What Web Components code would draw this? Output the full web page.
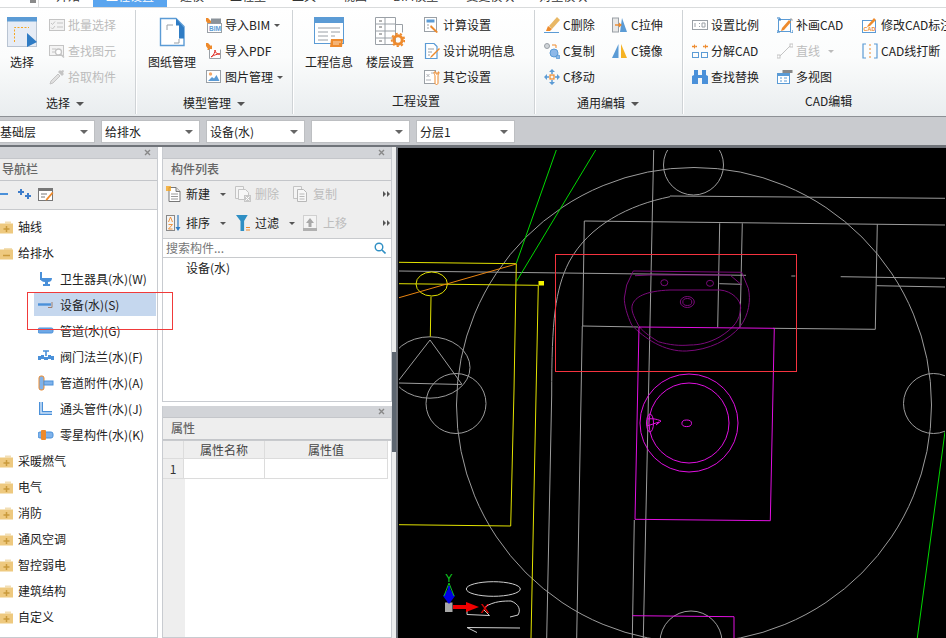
<!DOCTYPE html>
<html lang="zh"><head><meta charset="utf-8"><title>工程设置</title>
<style>
html,body{margin:0;padding:0;width:946px;height:638px;overflow:hidden;background:#fff;font:12px/16px "Noto Sans CJK SC","Noto Sans",sans-serif;color:#222}
</style></head><body>
<app-shell>
  <rb-tabs slot="tabs"></rb-tabs>
  <rb-ribbon slot="ribbon">
    <rb-group label="选择" caret w="136" lx="46">
      <rb-large label="选择" w="44" ml="0"><x-i n="select" s="30"></x-i></rb-large>
      <rb-col ml="5" w="86">
        <rb-small dis label="批量选择"><x-i n="batch"></x-i></rb-small>
        <rb-small dis label="查找图元"><x-i n="find"></x-i></rb-small>
        <rb-small dis label="拾取构件"><x-i n="pick"></x-i></rb-small>
      </rb-col>
    </rb-group>
    <rb-group label="模型管理" caret w="157" lx="47">
      <rb-large label="图纸管理" w="48" ml="12"><x-i n="drawing" s="30"></x-i></rb-large>
      <rb-col ml="10" w="84">
        <rb-small caret label="导入BIM"><x-i n="bim"></x-i></rb-small>
        <rb-small label="导入PDF"><x-i n="pdf"></x-i></rb-small>
        <rb-small caret label="图片管理"><x-i n="pic"></x-i></rb-small>
      </rb-col>
    </rb-group>
    <rb-group label="工程设置" w="242" up lx="99">
      <rb-large label="工程信息" w="48" ml="12"><x-i n="info" s="30"></x-i></rb-large>
      <rb-large label="楼层设置" w="48" ml="13"><x-i n="floor" s="30"></x-i></rb-large>
      <rb-col ml="10" w="100">
        <rb-small label="计算设置"><x-i n="calc"></x-i></rb-small>
        <rb-small label="设计说明信息"><x-i n="note"></x-i></rb-small>
        <rb-small label="其它设置"><x-i n="other"></x-i></rb-small>
      </rb-col>
    </rb-group>
    <rb-group label="通用编辑" caret w="148" lx="42">
      <rb-col ml="9" w="68">
        <rb-small label="C删除"><x-i n="cdel"></x-i></rb-small>
        <rb-small label="C复制"><x-i n="ccopy"></x-i></rb-small>
        <rb-small label="C移动"><x-i n="cmove"></x-i></rb-small>
      </rb-col>
      <rb-col w="60">
        <rb-small label="C拉伸"><x-i n="cstretch"></x-i></rb-small>
        <rb-small label="C镜像"><x-i n="cmirror"></x-i></rb-small>
      </rb-col>
    </rb-group>
    <rb-group label="CAD编辑" w="263" up last lx="122">
      <rb-col ml="9" w="85">
        <rb-small label="设置比例"><x-i n="scale"></x-i></rb-small>
        <rb-small label="分解CAD"><x-i n="split"></x-i></rb-small>
        <rb-small label="查找替换"><x-i n="binoc"></x-i></rb-small>
      </rb-col>
      <rb-col w="85">
        <rb-small label="补画CAD"><x-i n="patch"></x-i></rb-small>
        <rb-small dis caret label="直线"><x-i n="line"></x-i></rb-small>
        <rb-small label="多视图"><x-i n="multi"></x-i></rb-small>
      </rb-col>
      <rb-col w="84">
        <rb-small label="修改CAD标注"><x-i n="cadmark"></x-i></rb-small>
        <rb-small label="CAD线打断"><x-i n="cadcut"></x-i></rb-small>
      </rb-col>
    </rb-group>
  </rb-ribbon>
  <combo-bar slot="combos">
    <combo-box first>基础层</combo-box>
    <combo-box>给排水</combo-box>
    <combo-box>设备(水)</combo-box>
    <combo-box></combo-box>
    <combo-box>分层1</combo-box>
  </combo-bar>
  <work-area slot="main">
    <dock-panel slot="nav" heading="导航栏" pad="2">
      <tool-row slot="tools" h="29">
        <x-i n="collapse" w="9" h="16"></x-i><x-i n="expand" w="13" h="16" style="margin-left:9px"></x-i><x-i n="navdoc" style="margin-left:7px"></x-i>
      </tool-row>
      <nav-tree>
        <tree-row kind="plus" text="轴线"></tree-row>
        <tree-row kind="minus" text="给排水"></tree-row>
        <tree-row n="san" text="卫生器具(水)(W)"></tree-row>
        <tree-row n="equip" sel text="设备(水)(S)"></tree-row>
        <tree-row n="pipe" text="管道(水)(G)"></tree-row>
        <tree-row n="valve" text="阀门法兰(水)(F)"></tree-row>
        <tree-row n="acc" text="管道附件(水)(A)"></tree-row>
        <tree-row n="elbow" text="通头管件(水)(J)"></tree-row>
        <tree-row n="misc" text="零星构件(水)(K)"></tree-row>
        <tree-row kind="plus" text="采暖燃气"></tree-row>
        <tree-row kind="plus" text="电气"></tree-row>
        <tree-row kind="plus" text="消防"></tree-row>
        <tree-row kind="plus" text="通风空调"></tree-row>
        <tree-row kind="plus" text="智控弱电"></tree-row>
        <tree-row kind="plus" text="建筑结构"></tree-row>
        <tree-row kind="plus" text="自定义"></tree-row>
      </nav-tree>
    </dock-panel>
    <dock-panel slot="list" heading="构件列表" pad="8" style="height:255px">
      <tool-row slot="tools" h="29" noline style="padding-bottom:3px">
        <tool-btn label="新建" caret w="69"><x-i n="tnew" s="16"></x-i></tool-btn>
        <tool-btn label="删除" dis w="58"><x-i n="tdel" s="16"></x-i></tool-btn>
        <tool-btn label="复制" dis w="90"><x-i n="tcopy" s="16"></x-i></tool-btn>
        <more-arrows></more-arrows>
      </tool-row>
      <tool-row slot="tools" h="29" style="padding-bottom:2px">
        <tool-btn label="排序" caret w="69"><x-i n="tsort" s="16"></x-i></tool-btn>
        <tool-btn label="过滤" caret w="68"><x-i n="tfilter" s="16"></x-i></tool-btn>
        <tool-btn label="上移" dis w="80"><x-i n="tup" s="16"></x-i></tool-btn>
        <more-arrows></more-arrows>
      </tool-row>
      <search-box></search-box>
      <list-item>设备(水)</list-item>
    </dock-panel>
    <dock-panel slot="props" heading="属性" pad="8" style="flex:1;min-height:0">
      <prop-table></prop-table>
    </dock-panel>
    <cad-view slot="canvas"></cad-view>
  </work-area>
</app-shell>
<script>
const B='#5b9bd5',O='#ee8a2c',G='#9aa0a6',D='#c4c4c4',L='#dfe8f4';
const ICONS={
select:`<rect x=".5" y=".5" width="29" height="29" fill="#e6ecf5" stroke="#b9c4d2"/><rect width="30" height="4.5" fill="${B}"/><path d="M7.5 25V10.5H22" fill="none" stroke="#f5a623" stroke-dasharray="2 1.5"/><path d="M20 16l10 9-10 5z" fill="#2f7cc4"/>`,
batch:`<rect x=".5" y="2.5" width="15" height="11" fill="#f2f2f2" stroke="${D}"/><path d="M2 6l1.5 1.5L6 4.5M2 10.5l1.5 1.5L6 9M8 6h6M8 10h6" fill="none" stroke="${D}"/>`,
find:`<rect x=".5" y="2.5" width="14" height="10" fill="#f4f4f4" stroke="${D}"/><circle cx="9.5" cy="9" r="3" fill="#fff" stroke="${D}" stroke-width="1.3"/><path d="M12 11.5l3 3" stroke="${D}" stroke-width="1.6"/><path d="M3 6h4M3 9h3" stroke="${D}"/>`,
pick:`<path d="M1 15l1-3 7-7 2 2-7 7z" fill="#e0e0e0" stroke="${D}"/><path d="M9 3l2-2 1 1 2-1 1 1-1 2 1 1-2 2z" fill="${D}"/>`,
drawing:`<path d="M3.5 1.5H19l8 8v19H3.5z" fill="#fff" stroke="${B}" stroke-width="1.4"/><path d="M19 1.5l8 9v11h-5v-13h-3z" fill="#2f7cc4"/><path d="M10 13V8h6M22 22v4h-5" fill="none" stroke="${G}"/>`,
bim:`<path d="M0 1l2 0 3 3 1-1v5H1l1-1L0 4z" fill="${O}"/><rect x="1.5" y="6.5" width="14" height="9" fill="#fff" stroke="${G}"/><rect x="5" y="1.5" width="10" height="5" fill="#8a9299"/><text x="3" y="14" font-size="6.5" font-weight="700" fill="${B}" font-family="Liberation Sans">BIM</text>`,
pdf:`<path d="M0 0l2 0 3 3 1-1v5H1l1-1L0 3z" fill="${O}"/><path d="M3.5 6v9.5h11V6.5" fill="#fff" stroke="${G}"/><path d="M5 14c3-2 4-5 4-7 0 3 2 4 5 4-3 0-6 1-9 3z" fill="none" stroke="#e0332b"/>`,
pic:`<rect x=".5" y="1.5" width="14" height="12" fill="#fff" stroke="${G}"/><circle cx="4.5" cy="5" r="1.7" fill="#f5a96a"/><path d="M2 12l4-4 2 1.500 2.500-3.500 3 6z" fill="${B}"/>`,
info:`<rect x=".5" y=".5" width="29" height="26" fill="#fff" stroke="${B}"/><rect width="30" height="6" fill="${B}"/><path d="M4 11h22M4 15h10M4 19h10M4 23h10M17 15h9M17 19h4" stroke="${G}"/><path d="M17 22h12l-1 8H16z" fill="${O}"/><path d="M19 25h8M19 27h6" stroke="#fff" stroke-width=".7"/>`,
floor:`<path d="M.5.5h20v27H.5zM.5 7h20M.5 14h20M.5 21h20M10 .5v27" fill="#fff" stroke="${G}"/><path d="M4 4h3M4 10h3M4 17h3M4 24h3" stroke="#666"/><path d="M20.500 7.500h7v8" fill="none" stroke="${G}"/><circle cx="23" cy="23" r="4.200" fill="none" stroke="${O}" stroke-width="3"/><circle cx="23" cy="23" r="6.300" fill="none" stroke="${O}" stroke-width="1.800" stroke-dasharray="2.200 2.200"/>`,
calc:`<rect x=".5" y=".5" width="12" height="14" fill="#fff" stroke="${G}"/><rect x="2.500" y="2.500" width="8" height="3" fill="${B}"/><path d="M3 8h2M3 11h2" stroke="${G}"/><path d="M7 8l7 7-1.500 1L6 10z" fill="${O}"/>`,
note:`<path d="M1.500.5H10l3 3v12H1.500z" fill="#fff" stroke="${B}" stroke-width="1.200"/><path d="M4 6h6M4 9h4M4 12h2" stroke="${G}"/><path d="M7 13l8-8 1 1-8 8-2 1z" fill="${O}"/>`,
other:`<rect x=".5" y="1.500" width="11" height="13" fill="#fff" stroke="${G}"/><path d="M2.500 5l3 3M2.500 8l3-3M7 4h3M2 11h5" stroke="${G}" stroke-width=".8"/><path d="M10 3c0 2 1 3 1 4v7c0 2 3 2 3 0V7c0-1 1-2 1-4l-1 0v2h-2V3z" fill="#fff" stroke="${O}"/>`,
cdel:`<path d="M5 9L13 0l3 3-8 9z" fill="#e8b765"/><path d="M4 9l4 3-2 2-4 0z" fill="${O}"/><path d="M0 15.500h15" stroke="${B}"/>`,
ccopy:`<circle cx="3" cy="3" r="2.500" fill="#d0d4d8" stroke="${G}"/><circle cx="10" cy="10" r="4" fill="#8db8e8" stroke="${B}"/><circle cx="14" cy="14" r="2" fill="#8db8e8" stroke="${B}"/><path d="M8 2h4v3" fill="none" stroke="${O}"/>`,
cmove:`<rect x="6" y="6" width="4" height="4" fill="none" stroke="${O}" stroke-width="1.200"/><path d="M8 0l3 3H5zM8 16l3-3H5zM0 8l3-3v6zM16 8l-3-3v6z" fill="${B}"/><path d="M8 3v2M8 11v2M3 8h2M11 8h2" stroke="${B}" stroke-width="1.500"/>`,
cstretch:`<rect x=".5" y="1" width="6" height="14" fill="#e8e8e8" stroke="${G}"/><path d="M10 1l5 14H8z" fill="${B}"/><path d="M3 8h6" stroke="${O}" stroke-width="1.400"/><path d="M10 8L7 5.500v5z" fill="${O}"/>`,
cmirror:`<path d="M6.500 1v14H0z" fill="${B}"/><path d="M9 1v14h6z" fill="#f5b324"/>`,
scale:`<rect x=".5" y="3.500" width="15" height="9" fill="#fff" stroke="${G}"/><path d="M3 6v4M7.500 6v1M7.500 9v1M10 6v4h3V6z" fill="none" stroke="${G}"/>`,
split:`<path d="M0 3.500h2M4 3.500h1M11 3.500h1M14 3.500h2" stroke="${O}" stroke-width="1.500"/><path d="M2 1l2 2.500L2 6zM14 1l-2 2.500L14 6z" fill="${O}"/><rect x=".5" y="9.500" width="6" height="5" fill="none" stroke="${B}"/><rect x="9.500" y="9.500" width="6" height="5" fill="none" stroke="${B}"/>`,
binoc:`<path d="M2 1h4v5h4V1h4v5l2 1v8h-6V9H6v6H0V7l2-1z" fill="#4a90d9"/>`,
patch:`<rect x="1.500" y="2.500" width="12" height="12" fill="none" stroke="${B}"/><path d="M0 1h3v3M16 13v3h-3M0 13v3h3" fill="none" stroke="#2f7cc4"/><path d="M5 11l7-8 2 2-7 8-3 1z" fill="${O}"/><path d="M13 2l1-1 2 2-1 1z" fill="#aaa"/>`,
line:`<path d="M2 14L14 2" stroke="${D}"/><rect x="0" y="12" width="3" height="3" fill="#fff" stroke="${D}"/><rect x="13" y="1" width="3" height="3" fill="#fff" stroke="${D}"/>`,
multi:`<rect x="5.500" y="1" width="10" height="3" fill="#888"/><rect x=".5" y="4.500" width="12" height="10" fill="#fff" stroke="${B}"/><rect y="4" width="13" height="3" fill="${B}"/><path d="M3 9h2M3 12h2M7 9h3M7 12h3" stroke="${B}"/>`,
cadmark:`<rect x=".5" y="3.500" width="13" height="12" fill="#fff" stroke="${B}"/><text x="1.500" y="13.500" font-size="5.500" font-weight="700" fill="${O}" font-family="Liberation Sans">CAD</text><path d="M6 8l6-7 2 2-6 6-3 1z" fill="${O}"/>`,
cadcut:`<path d="M4 1H1v14h3M12 1h3v14h-3" fill="none" stroke="${B}" stroke-width="1.200"/><path d="M8 1v14" stroke="${O}" stroke-dasharray="2 2"/>`,
collapse:`<path d="M0 7h8" stroke="#4a90d9" stroke-width="2"/>`,
expand:`<path d="M3 2v6M0 5h6" stroke="#3d7cc9" stroke-width="2"/><path d="M10 6v6M7 9h6" stroke="#3d7cc9" stroke-width="2"/>`,
navdoc:`<rect x=".5" y="1.500" width="14" height="12" fill="#fff" stroke="#777"/><rect width="15" height="3" y="1" fill="#777"/><path d="M3 7h6M3 10h4" stroke="#777"/><path d="M8 12l6-7 1.500 1-6 7-2 .5z" fill="${O}"/>`,
san:`<path d="M3 1v8" stroke="#4a90d9" stroke-width="2"/><path d="M2 7h12c0 3-2 4-4 4v2h2v2H5v-2h2v-2c-3 0-5-2-5-4z" fill="#4a90d9"/>`,
equip:`<path d="M0 7.500h13" stroke="#4a90d9" stroke-width="2.400"/><path d="M10 10.500h4V5" fill="none" stroke="#a08070"/>`,
pipe:`<rect x="0" y="5" width="15" height="5" rx="1.500" fill="#6fa8e6" stroke="#4a90d9"/>`,
valve:`<path d="M0 7h3v-1h3v2h4V6h3v1h3v4h-3v-1h-3v1H6v-1H3v1H0z" fill="#4a90d9"/><path d="M5 2h6M8 2v5" stroke="#4a90d9" stroke-width="1.600"/>`,
acc:`<rect x="1" y="1" width="5" height="14" rx="2" fill="#7fb2ea" stroke="${O}"/><rect x="6" y="6" width="9" height="4" fill="#7fb2ea" stroke="#4a90d9"/>`,
elbow:`<path d="M3 1v11h11" fill="none" stroke="#4a90d9" stroke-width="4"/><path d="M3 1v11h11" fill="none" stroke="#cfe2f7" stroke-width="1.500"/>`,
misc:`<rect x="0" y="5" width="15" height="6" rx="2" fill="#7fb2ea" stroke="#4a90d9"/><rect x="3" y="3" width="5" height="10" fill="${O}" rx="1"/>`,
tnew:`<path d="M3 1.500h7l4 4v10H3z" fill="#fff" stroke="#777"/><path d="M5 8h7M5 10.500h7M5 13h7" stroke="#999"/><path d="M0 0h5v5H0z" fill="#f5a623" opacity=".8"/><path d="M10 1.500v4h4" fill="#ddd" stroke="#777"/>`,
tdel:`<path d="M.5.5h8v12H.5z" fill="#f4f4f4" stroke="${D}"/><path d="M3.500 3.500h7l3 3v7h-10z" fill="#f7f7f7" stroke="${D}"/><rect x="9" y="9" width="7" height="7" fill="#c8c8c8"/><path d="M10.500 10.500l4 4M14.500 10.500l-4 4" stroke="#fff"/>`,
tcopy:`<path d="M.5.5h8v12H.5z" fill="#f4f4f4" stroke="${D}"/><path d="M4.500 3.500h6l3 3v9h-9z" fill="#f7f7f7" stroke="#b8b8b8"/><path d="M6.500 8h5M6.500 10.500h5M6.500 13h5" stroke="#b8b8b8"/>`,
tsort:`<rect x=".5" y=".5" width="8" height="15" fill="#f4f4f4" stroke="#888"/><path d="M2.500 7l2-5 2 5M2.500 9.500h4l-4 4.500h4" fill="none" stroke="${O}" stroke-width=".9"/><path d="M12 0v14" stroke="#2f7cc4" stroke-width="1.200"/><path d="M9.500 12l2.500 4 2.500-4z" fill="#2f7cc4"/>`,
tfilter:`<path d="M0 0h13l-4 6v10H5V6z" fill="#2f8fc4" transform="translate(1 0) scale(.9 1)"/><path d="M11 12.500h4M11 15h4" stroke="${O}" stroke-width="1.200"/>`,
tup:`<rect x=".5" y=".5" width="13" height="15" fill="#f4f4f4" stroke="#d0d0d0"/><path d="M7 3l4 5H8.500v4h-3V8H3z" fill="#a8a8a8"/><rect y="13" width="14" height="3" fill="#b0b0b0"/>`
};
function def(name,html,init){
  customElements.define(name,class extends HTMLElement{
    constructor(){super();this.attachShadow({mode:'open'}).innerHTML=html}
    connectedCallback(){init&&init.call(this,this.shadowRoot)}
  });
}
def('x-i','<style>:host{display:inline-flex;flex:none}svg{display:block}</style>',function(r){
  const s=+this.getAttribute('s')||16,w=+this.getAttribute('w')||s,h=+this.getAttribute('h')||s;
  r.innerHTML+=`<svg width="${w}" height="${h}" viewBox="0 0 ${w} ${h}" aria-hidden="true">${ICONS[this.getAttribute('n')]||''}</svg>`;
});
def('app-shell',`<style>:host{display:flex;flex-direction:column;width:946px;height:638px;overflow:hidden;position:relative}
.m{flex:1;min-height:0;display:flex}</style><slot name="tabs"></slot><slot name="ribbon"></slot><slot name="combos"></slot><div class="m"><slot name="main"></slot></div>`);
def('rb-tabs',`<style>:host{display:flex;flex:none;height:7px;overflow:hidden;background:#fff;border-bottom:1px solid #d9dbdc;align-items:flex-start;color:#333}
span{display:block;margin-top:-12px;line-height:16px;font-size:12px;white-space:nowrap}
.a{width:74px;height:7px;background:#5aa5ef;color:#fff;display:block;margin-left:13px;overflow:hidden;text-align:center;flex:none}.a span{margin-top:-12px}
.q{width:6px;height:3px;background:#8a8a8a;margin-left:30px;flex:none}.v{width:1px;height:7px;background:#ddd;margin-left:2px;flex:none}</style>
<i class="q"></i><i class="v"></i><span style="margin-left:17px">开始</span><div class="a"><span>工程设置</span></div><span style="margin-left:13px">建模</span><span style="margin-left:26px">工程量</span><span style="margin-left:26px">工具</span><span style="margin-left:27px">视图</span><span style="margin-left:26px">BIM模型</span><span style="margin-left:28px">变更模块</span><span style="margin-left:25px">对量模块</span>`);
def('rb-ribbon',`<style>:host{display:flex;flex:none;height:109px;box-sizing:border-box;padding-top:2px;background:linear-gradient(#fff 0,#fbfcfc 45%,#e9edef 100%);overflow:hidden;border-bottom:1px solid #8d9095}</style><slot></slot>`);
def('rb-group',`<style>:host{display:flex;flex-direction:column;flex:none;box-sizing:border-box;height:104px;border-right:1px solid #cfd3d6;box-shadow:1px 0 0 #fff;white-space:nowrap}
.c{display:flex;height:80px;box-sizing:border-box;padding-top:2px;flex:none}.l{height:24px;display:flex;align-items:center;gap:6px;padding-top:2px;box-sizing:border-box}
.l.up{padding-top:0;padding-bottom:2px}
i{display:none;border:4px solid transparent;border-top:4px solid #555;border-bottom:0;width:0;height:0;margin-top:1px}.car i{display:block}</style><div class="c"><slot></slot></div><div class="l"><span id="t"></span><i></i></div>`,function(r){
  this.style.width=this.getAttribute('w')+'px';
  r.getElementById('t').textContent=this.getAttribute('label');
  const l=r.querySelector('.l');
  l.style.paddingLeft=this.getAttribute('lx')+'px';
  if(this.hasAttribute('caret'))l.classList.add('car');
  if(this.hasAttribute('up'))l.classList.add('up');
  if(this.hasAttribute('last')){this.style.border='none';this.style.boxShadow='none'}
});
def('rb-large',`<style>:host{display:flex;flex-direction:column;align-items:center;flex:none;padding-top:5px;box-sizing:border-box;height:78px}
.l{margin-top:7px;line-height:16px;white-space:nowrap}</style><slot></slot><div class="l"></div>`,function(r){
  this.style.width=this.getAttribute('w')+'px';this.style.marginLeft=(this.getAttribute('ml')||0)+'px';
  r.querySelector('.l').textContent=this.getAttribute('label');
});
def('rb-col',`<style>:host{display:flex;flex-direction:column;flex:none}</style><slot></slot>`,function(){
  this.style.width=this.getAttribute('w')+'px';this.style.marginLeft=(this.getAttribute('ml')||0)+'px';
});
def('rb-small',`<style>:host{display:flex;align-items:center;height:26px;gap:3px;white-space:nowrap}
:host([dis]){color:#bcbcbc}i{display:none;border:3.500px solid transparent;border-top:3.500px solid #555;border-bottom:0;width:0;height:0;margin-left:1px}:host([caret]) i{display:block}:host([dis]) i{border-top-color:#bbb;margin-left:5px}</style><slot></slot><span></span><i></i>`,function(r){
  r.querySelector('span').textContent=this.getAttribute('label');
});
def('combo-bar',`<style>:host{display:flex;flex:none;box-sizing:border-box;padding-top:3px;gap:6px;background:#c9cbcf;overflow:hidden;border-bottom:2px solid #6f7379;height:30px}</style><slot></slot>`);
def('combo-box',`<style>:host{display:flex;align-items:center;justify-content:space-between;flex:none;box-sizing:border-box;width:99px;height:23px;background:#fff;border:1px solid #bdbfc2;padding:0 6px 0 3px;white-space:nowrap}
:host([first]){margin-left:-5px;width:100px;padding-left:4px}
i{border:4px solid transparent;border-top:4px solid #666;border-bottom:0;width:0;height:0}</style><span><slot></slot></span><i></i>`);
def('work-area',`<style>:host{display:flex;flex:1;min-width:0;height:491px;position:relative;background:#fff}
.n{width:158px;flex:none;display:flex}.g{width:4px;flex:none}.md{width:230px;flex:none;display:flex;flex-direction:column;gap:4px}
.sp{width:4px;flex:none;background:#eceded;display:flex;flex-direction:column}.sp b{display:block;height:100px;margin-top:205px;background:#5d6670}
.c{flex:1;min-width:0;display:flex}
.red{position:absolute;left:27px;top:145px;width:144px;height:36px;border:1px solid #f03a3a;pointer-events:none}</style>
<div class="n"><slot name="nav"></slot></div><div class="g"></div><div class="md"><slot name="list"></slot><slot name="props"></slot></div><div class="sp"><b></b></div><div class="c"><slot name="canvas"></slot></div><div class="red"></div>`);
def('dock-panel',`<style>:host{display:flex;flex-direction:column;box-sizing:border-box;flex:none;width:100%;background:#fff;border:solid #c8cbd0;border-width:0 1px 1px 1px;overflow:hidden}
.t{height:11px;background:#d2d4d8;display:flex;justify-content:flex-end;align-items:center;padding-right:6px;color:#888;flex:none}
.t svg{display:block}
.h{height:21px;line-height:19px;background:#eee;color:#666;border-top:1px solid #c4c6ca;border-bottom:1px solid #c4c6ca;flex:none;font-weight:500}
.b{flex:1;min-height:0;display:flex;flex-direction:column}</style>
<div class="t"><svg width="7" height="7" viewBox="0 0 7 7"><path d="M1 1l5 5M6 1l-5 5" stroke="#888" stroke-width="1.400"/></svg></div><div class="h"></div><slot name="tools"></slot><div class="b"><slot></slot></div>`,function(r){
  const h=r.querySelector('.h');h.textContent=this.getAttribute('heading');h.style.paddingLeft=this.getAttribute('pad')+'px';
  if(this.getAttribute('slot')==='nav'){this.style.borderLeft='none'}
});
def('tool-row',`<style>:host{display:flex;align-items:center;background:#eee;box-sizing:border-box;flex:none;border-bottom:1px solid #c8cacd;padding-left:3px}:host([noline]){border-bottom:none}</style><slot></slot>`,function(){
  this.style.height=this.getAttribute('h')+'px';
  if(this.getAttribute('slot')==='tools'&&this.parentElement.getAttribute('heading')==='导航栏')this.style.paddingLeft='0';
});
def('tool-btn',`<style>:host{display:flex;align-items:center;flex:none;gap:4px;white-space:nowrap}:host([dis]){color:#bdbdbd}
i{display:none;border:3.500px solid transparent;border-top:3.500px solid #555;border-bottom:0;width:0;height:0;margin-left:6px}:host([caret]) i{display:block}</style><slot></slot><span></span><i></i>`,function(r){
  this.style.width=this.getAttribute('w')+'px';r.querySelector('span').textContent=this.getAttribute('label');
});
def('more-arrows',`<style>:host{display:flex;margin-left:auto;margin-right:3px;gap:1px}i{border:solid transparent;border-width:3px 0 3px 3px;border-left-color:#555}</style><i></i><i></i>`);
def('search-box',`<style>:host{display:flex;align-items:center;justify-content:space-between;height:19px;box-sizing:border-box;border-bottom:1px solid #c8cacd;padding:0 5px 0 3px;color:#777;flex:none}</style><span>搜索构件...</span><svg width="12" height="12" viewBox="0 0 12 12"><circle cx="5" cy="5" r="3.800" fill="none" stroke="#2f8fc4" stroke-width="1.400"/><path d="M8 8l3.500 3.500" stroke="#2f8fc4" stroke-width="1.600"/></svg>`);
def('list-item',`<style>:host{display:block;padding:1px 0 0 23px;line-height:18px}</style><slot></slot>`);
def('nav-tree',`<style>:host{display:flex;flex-direction:column;padding-top:4px;flex:1}</style><slot></slot>`);
def('tree-row',`<style>:host{display:flex;align-items:center;height:26px;flex:none;white-space:nowrap}
.s{display:flex;align-items:center;height:23px;margin-top:-1px}
svg{display:block;flex:none}</style><div class="s"></div>`,function(r){
  const s=r.querySelector('.s'),k=this.getAttribute('kind'),t=this.getAttribute('text');
  if(k){
    const sign=k==='plus'?'<path d="M6.500 6v6M3.500 9h6" stroke="#c99a3c" stroke-width="1.500"/>':'<path d="M3 9.500h7" stroke="#c99a3c" stroke-width="1.500"/>';
    const tab=k==='plus'?'<path d="M5 1.500h6v2H5z" fill="#f2dfb6"/>':'<path d="M4 2h8v2H4z" fill="#f2dfb6"/>';
    s.innerHTML=`<svg width="13" height="14" viewBox="0 0 13 14">${tab}<rect y="3.500" width="13" height="10" fill="#eec97f"/>${sign}</svg><span style="margin-left:5px">${t}</span>`;
    s.style.marginLeft='0';
  }else{
    s.style.marginLeft='34px';
    if(this.hasAttribute('sel')){s.style.background='#c5d7ee';s.style.width='122px'}
    s.innerHTML=`<span style="width:4px;flex:none"></span><x-i n="${this.getAttribute('n')}"></x-i><span style="margin-left:6px">${t}</span>`;
  }
});
def('prop-table',`<style>:host{display:block;flex:1;background:linear-gradient(90deg,#eee 22px,#fff 22px);line-height:18px}
.g{display:grid;grid-template-columns:21px 81px 123px;grid-template-rows:18px 20px;border-top:1px solid #c8cacd}
div div{box-sizing:border-box;border-right:1px solid #dcdcdc;border-bottom:1px solid #dcdcdc;text-align:center;color:#444}
.e{background:#eee}.w{background:#fff}.n{line-height:20px;color:#333}</style>
<div class="g"><div class="e"></div><div class="e">属性名称</div><div class="e">属性值</div><div class="e n">1</div><div class="w"></div><div class="w"></div></div>`);
def('cad-view',`<style>:host{display:block;flex:1;height:491px;background:#000;border-left:2px solid #6d7178;border-top:1px solid #6d7178;box-sizing:border-box;overflow:hidden}
svg{display:block}text{font-family:"Liberation Sans",sans-serif}</style>
<svg width="547" height="490" viewBox="399 148 547 490" fill="none" stroke-width="1">
<defs><clipPath id="cp"><rect x="400" y="150" width="546" height="488"/></clipPath></defs>
<g clip-path="url(#cp)">
<g stroke="#9c9c9c">
<circle cx="695" cy="405" r="237.500"/>
<circle cx="694.500" cy="165" r="30"/>
<circle cx="934.500" cy="403.500" r="30"/>
<circle cx="692" cy="642" r="31"/>
<ellipse cx="431" cy="367.500" rx="40" ry="30.700"/>
<circle cx="457" cy="403.500" r="30"/>
<path d="M431 340L400 380M431 340L462.700 384M400 383L462.700 384.500"/>
<path d="M400 271L671 274.300L747 275.300M792.300 276H796.300M841.700 276.700L946 278.300"/>
<path d="M671 196.700C630 205 590 225 570 262C556 290 552.700 320 552.700 395L547.700 638"/>
<path d="M671 196L946 198.300"/>
<path d="M585.300 221L946 225M585.300 221L583.700 326L639.300 327M774.300 328.300L876.300 329.300L878.300 224.300"/>
<path d="M654.700 150L644.300 638M583.300 326L577.700 638M635.300 520L633.300 638"/>
<path d="M720.700 223.300L718.700 327.300M743.300 223.300L741 327.300M720.300 283.700L742.700 284.300M877.700 285.700L946 287"/>
</g>
<g stroke="#e2e200">
<path d="M400 262.300L517.300 263.700L515 390L511.700 526L400 524.700"/>
<path d="M400 283.700L539.300 285.300L532 638"/>
<ellipse cx="432.700" cy="284" rx="15.700" ry="12"/>
<path d="M432 296.700L431.300 336.700"/>
</g>
<rect x="539.500" y="281" width="5.500" height="4.500" fill="#f3f300"/>
<path d="M400 297.700L517.300 264" stroke="#e88410"/>
<path d="M557.300 150L517.300 263.300M596.700 150L517.300 281.700M946 431.700L918.300 638" stroke="#00d800"/>
<g stroke="#7a0a7a">
<path d="M634.300 271L742.700 272.300L749.300 288.300C752 300 750 315 741 326.700C730 340 710 350 687.700 351C665 352 645 338 632.700 325C628 315 625.300 305 625.300 298L627.700 285Z"/>
<path d="M636 275.700L650 275H731L742.700 285"/>
<path d="M671 290H721C733 291 742 300 741.700 308C741 320 735 328 721 336.700C710 343 700 345 691 345C680 346 671 345 659.300 341.700C650 336 642 330 639.300 325C634 315 632 310 633.300 305C636 297 646 291 671 290Z"/>
<ellipse cx="688.300" cy="302" rx="7" ry="5.500"/><ellipse cx="688.300" cy="302" rx="4.500" ry="3.500"/>
<ellipse cx="665.300" cy="282.700" rx="3.500" ry="3"/><ellipse cx="711" cy="283.300" rx="3.500" ry="3"/>
</g>
<g stroke="#e010e0">
<path d="M640 327L775.300 328.300L771.300 520.700L636 519.300Z"/>
<path d="M633.300 615.700L735 616.700V638"/>
<circle cx="690" cy="423" r="49"/><circle cx="690" cy="423" r="40"/>
<ellipse cx="687.700" cy="423.300" rx="4.800" ry="3.300"/>
<ellipse cx="651" cy="423" rx="3.500" ry="9"/><path d="M648 419C655 418 660 420 662 421L657 425L660 422L648 426"/>
</g>
<rect x="556.500" y="254.500" width="241" height="117" stroke="#f5333f"/>
<g stroke="#cfcfcf">
<ellipse cx="494.300" cy="589" rx="27" ry="7.300"/>
<path d="M468 608V614.500L490.500 615.500L485 610M486 607C495 601 505 601 512 601C520 604 522 610 519 615L511 617"/>
<path d="M468 627.500L521 628M468 627.500L478 632.500"/>
</g>
<rect x="446" y="602.500" width="7.500" height="9.500" fill="#a8a8a8"/>
<path d="M450 603V586" stroke="#0000e6" stroke-width="2.500"/><path d="M450 588L456 596L450 604L444 596Z" fill="#0000e6"/>
<path d="M450 583L445 596M450 583L455 596" stroke="#10c020"/>
<path d="M454 607H471" stroke="#f00000" stroke-width="4"/><path d="M467 602L480 607L467 612Z" fill="#f00000"/>
<text x="450" y="582" font-size="11" fill="#10d020" text-anchor="middle">Y</text>
<text x="485.500" y="612.500" font-size="13" fill="#f00000" text-anchor="middle">X</text>
</g></svg>`);
</script>
</body></html>
